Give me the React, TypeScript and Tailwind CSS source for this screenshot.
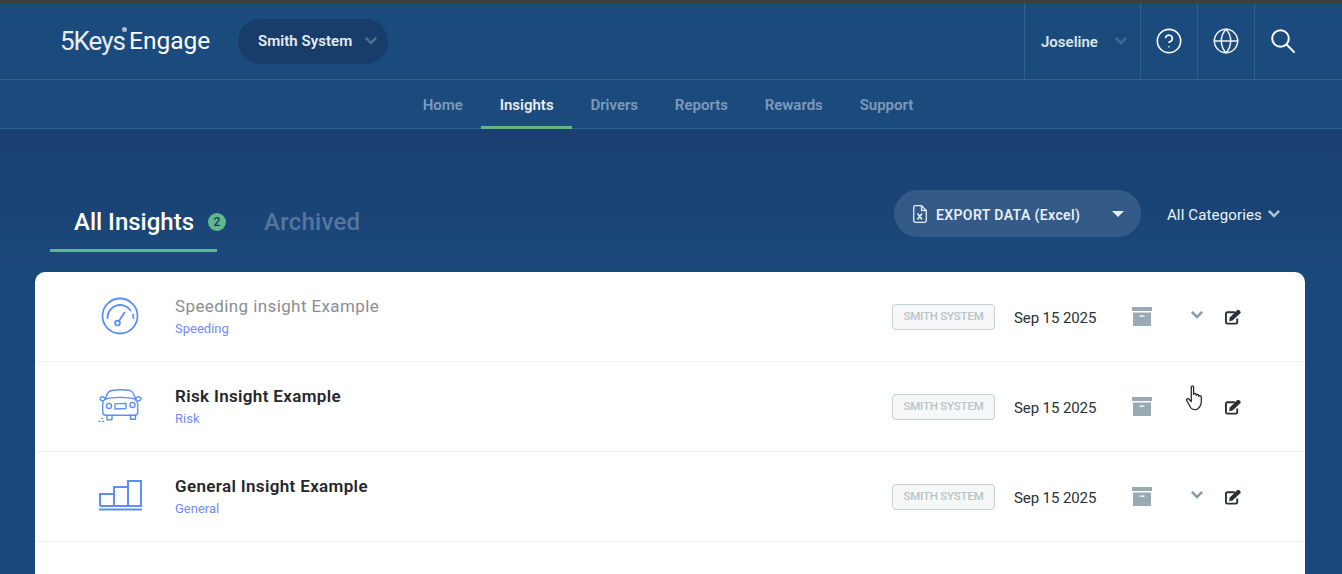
import React from "react";
import { Globe, CircleHelp } from "lucide-react";

// Solid chevron, heavier than the lucide one
const Chevron = ({ className }: { className: string }) => (
  <svg width="12" height="8" viewBox="0 0 12 8" className={className} fill="currentColor">
    <path d="M0 1.800L1.700 0 6 4.300 10.300 0 12 1.800 6 7.800z" />
  </svg>
);

const SearchIcon = () => (
  <svg width="24" height="24" viewBox="0 0 24 24" fill="none" stroke="#fff" strokeWidth="2" strokeLinecap="round">
    <circle cx="9.500" cy="9.500" r="8.300" />
    <path d="M15.500 15.500l7.500 7.500" />
  </svg>
);

// Icons for the insight rows
const GaugeIcon = () => (
  <svg width="38" height="38" viewBox="0 0 38 38" fill="none" stroke="#5c8ff5" strokeWidth="1.800" strokeLinecap="round" className="-translate-y-[1px]">
    <circle cx="19" cy="19" r="17.500" />
    <path d="M6.500 21a12.600 12.600 0 0 1 23-7.500" />
    <path d="M32 17.500c.3 1 .4 2.200.4 3.500" />
    <circle cx="16.500" cy="26" r="2.400" />
    <path d="M18 24l5.500-8.500" />
  </svg>
);

const CarIcon = () => (
  <svg width="44" height="37" viewBox="0 0 44 36" preserveAspectRatio="none" fill="none" stroke="#5c8ff5" strokeWidth="1.400" strokeLinecap="round" strokeLinejoin="round" className="translate-y-[1px]">
    <path d="M7 10l2.500-5.500C10.500 2.500 12 1.600 14 1.400 20 .6 27 .6 31 1.200c2 .3 3.400 1.300 4.200 3L38 10" />
    <path d="M7 10c-1.500 1.200-2.300 2.600-2.300 4.500v8c0 1.800 1.200 3 3 3h29c1.800 0 3-1.200 3-3v-8c0-1.900-.8-3.300-2.700-4.500" />
    <path d="M7 10C14 7.500 30 7.500 38 10" />
    <path d="M6.500 8.500C4.500 6.800 2 7.600 2 9.500c0 1.500 1.800 2 3.500 2.200M38.500 8.500c2-1.700 4.500-.9 4.500 1 0 1.500-1.800 2-3.500 2.200" />
    <circle cx="11" cy="16.500" r="2.500" />
    <circle cx="34.500" cy="15.500" r="2.500" />
    <path d="M17 14.500l11-.5v5l-11 .5z" />
    <path d="M9 25.500V30h5v-4.500M32.500 25.500V29.500h5v-4" />
    <path d="M1 31.500h1M4.500 31.500h1M4 28.500h.5" />
  </svg>
);

const BarsIcon = () => (
  <svg width="43" height="31" viewBox="0 0 43 31" fill="none" stroke="#5c8ff5" strokeWidth="2" className="-translate-y-[1px]">
    <path d="M1 26V14h14v12H1M15 26V7h14v19M29 26V1h13v25H1" />
    <path d="M0 29.500h43" />
  </svg>
);

const ArchiveIcon = () => (
  <svg width="20" height="19" viewBox="0 0 20 19">
    <rect x="0" y="0" width="20" height="4" fill="#9aaab5" />
    <path d="M1 5.500h18V19H1z" fill="#9aaab5" />
    <rect x="7.500" y="8.500" width="5" height="1.300" fill="#fff" />
  </svg>
);

const EditIcon = () => (
  <svg width="17" height="16" viewBox="0 0 17 16" fill="none">
    <path d="M10.500 3H2.500A1.500 1.500 0 0 0 1 4.500v9A1.500 1.500 0 0 0 2.500 15h9a1.500 1.500 0 0 0 1.500-1.500V9.500" stroke="#2b2f36" strokeWidth="2" />
    <path d="M5 8.500L13 .8q1-.8 2 0l1.300 1.300q.8 1 0 2L8 11.800l-3.600.6z" fill="#2b2f36" />
  </svg>
);

const ExcelIcon = () => (
  <svg width="14" height="18" viewBox="0 0 14 18" fill="none" stroke="#e8edf3" strokeWidth="1.300">
    <path d="M2 .7h6.500L13.300 5.500V15.500A1.800 1.800 0 0 1 11.500 17.300H2A1.500 1.500 0 0 1 .7 15.500V2A1.500 1.500 0 0 1 2 .7z" />
    <path d="M8.500 .7V5.500H13.300" />
    <path d="M4.500 8.500l4.500 6M9 8.500l-4.500 6" strokeWidth="1.500" />
  </svg>
);

// Mouse pointer caught in the screenshot
const HandCursor = () => (
  <svg width="19" height="26" viewBox="0 0 18 26" preserveAspectRatio="none" fill="#fff" stroke="#22262c" strokeWidth="1.200" strokeLinejoin="round">
    <path d="M5 2c0-1.500 2.200-1.500 2.200 0v7.500c.2-1.600 2.400-1.600 2.500 0v1c.2-1.500 2.300-1.500 2.400 0v1c.2-1.300 2.200-1.300 2.300.2.300 3 .3 6-.6 8.500-.7 2-1.800 3.300-3.700 4.300-2.200.5-4.200 0-5.400-1.500L.7 15.500c-.8-1.200.6-2.400 1.800-1.500L5 16.500z" />
  </svg>
);

const navLinks = ["Home", "Insights", "Drivers", "Reports", "Rewards", "Support"];

interface Insight {
  title: string;
  category: string;
  icon: React.ReactNode;
  read?: boolean;
  hovered?: boolean;
}

const insights: Insight[] = [
  { title: "Speeding insight Example", category: "Speeding", icon: <GaugeIcon />, read: true },
  { title: "Risk Insight Example", category: "Risk", icon: <CarIcon />, hovered: true },
  { title: "General Insight Example", category: "General", icon: <BarsIcon /> },
];

function InsightRow({ insight }: { insight: Insight }) {
  return (
    <div className="flex h-[90px] items-center border-b border-[#f0f1f3] pl-[50px]">
      <div className="flex w-[70px] justify-center">{insight.icon}</div>
      <div className="ml-[20px] flex-1">
        <div
          className={
            insight.read
              ? "text-[17px] leading-[22px] tracking-[0.4px] text-[#8b8d93]"
              : "text-[17px] font-semibold leading-[22px] tracking-[0.35px] text-[#25272b]"
          }
        >
          {insight.title}
        </div>
        <div className="mt-[3px] text-[13px] leading-[18px] text-[#6f8cf8]">{insight.category}</div>
      </div>
      <div className="flex h-[26px] w-[103px] items-center justify-center rounded-[4px] border border-[#c3ced6] bg-[#f6f8f8] text-[11.500px] font-medium tracking-[-0.2px] text-[#b9c3ca]">
        SMITH SYSTEM
      </div>
      <div className="ml-[19px] w-[82px] translate-y-[2px] whitespace-nowrap text-[15px] tracking-[-0.1px] text-[#2b2f36]">
        Sep 15 2025
      </div>
      <div className="ml-[36px] flex w-[20px]">
        <ArchiveIcon />
      </div>
      <div className="ml-[39px] flex w-[12px] -translate-y-[2px] justify-center">
        {!insight.hovered && <Chevron className="shrink-0 text-[#8a9aa6]" />}
      </div>
      <div className="ml-[22px] mr-[64px] flex w-[16px]">
        <EditIcon />
      </div>
    </div>
  );
}

export default function App() {
  return (
    <div className="h-[574px] w-[1342px] overflow-hidden bg-gradient-to-b from-[#1a3f70] from-[22%] to-[#1b487b] to-[47%] [font-family:Roboto,'Noto_Sans',sans-serif]">
      <div className="h-[3px] bg-[#3f3f3f]" />

      {/* Top bar */}
      <header className="flex h-[77px] items-stretch justify-between border-b border-[#33608f] bg-[#1b4a7d]">
        <div className="flex items-center pl-[61px]">
          <div className="flex w-[150px] items-start whitespace-nowrap leading-none text-white">
            <span className="ml-[-1px] text-[26px] tracking-[-1px] text-[#e6edf4]">5Keys</span>
            <span className="ml-[-3px] mt-[-1px] h-[5px] w-[5px] shrink-0 rounded-full bg-[#a9bdd1]" />
            <span className="ml-[2px] mt-[1px] text-[24.500px]">Engage</span>
          </div>
          <button className="ml-[27px] flex h-[45px] w-[150px] items-center rounded-full bg-[#183d6b] pl-[20px] pt-[1px] text-[15px] font-semibold tracking-[0.05px] text-[#e6ebf1]">
            Smith System
            <Chevron className="ml-[13px] -translate-y-[1px] text-[#4f6f94]" />
          </button>
        </div>
        <div className="flex items-stretch">
          <div className="flex w-[116px] items-center border-l border-[#33608f] pl-[16px] pt-[3px] text-[15px] font-semibold text-[#dce4ec]">
            Joseline
            <Chevron className="ml-[17px] -translate-y-[2px] text-[#48698e]" />
          </div>
          <div className="flex w-[57px] items-center justify-center border-l border-[#33608f]">
            <CircleHelp size={28} strokeWidth={1.4} className="text-white" />
          </div>
          <div className="flex w-[57px] items-center justify-center border-l border-[#33608f]">
            <Globe size={28} strokeWidth={1.3} className="text-[#eef2f6]" />
          </div>
          <div className="flex w-[88px] items-center border-l border-[#33608f] pl-[16px]">
            <SearchIcon />
          </div>
        </div>
      </header>

      {/* Main nav */}
      <nav className="flex h-[49px] items-stretch justify-center border-b border-[#33608f] bg-[#1b4a7d] pr-[6px]">
        {navLinks.map((link) => (
          <a
            key={link}
            className={
              link === "Insights"
                ? "-mb-[1px] flex items-center border-b-[3px] border-[#5fb88c] px-[18.400px] pt-[5px] text-[15px] font-semibold text-[#e8edf3]"
                : "flex items-center px-[18.400px] pt-[3px] text-[15px] font-semibold text-[#7e9aba]"
            }
          >
            {link}
          </a>
        ))}
      </nav>

      <main className="pl-[35px] pr-[37px] pt-[61px]">
        <div className="flex h-[82px] items-start justify-between">
          {/* Tabs */}
          <div className="flex items-start pl-[15px]">
            <div className="flex h-[62px] w-[167px] items-center whitespace-nowrap border-b-[3px] border-[#5fb88c] pl-[24px] pt-[5px]">
              <span className="w-[120px] text-[24px] font-medium leading-none text-white">All Insights</span>
              <span className="ml-[14px] flex h-[18px] w-[18px] shrink-0 items-center justify-center rounded-full bg-[#5fb88c] text-[12px] font-medium text-[#1b3a5c]">
                2
              </span>
            </div>
            <div className="ml-[47px] flex h-[62px] items-center pt-[1px] text-[24px] font-medium leading-none tracking-[0.25px] text-[#54769f]">
              Archived
            </div>
          </div>

          {/* Export and filter */}
          <div className="flex items-start">
            <button className="flex h-[47px] w-[247px] items-center rounded-full bg-[#345a88] pl-[19px] text-[14px] font-semibold tracking-[0.4px] text-[#e8edf3]">
              <ExcelIcon />
              <span className="ml-[9px] translate-y-[2px] whitespace-nowrap">EXPORT DATA (Excel)</span>
              <span className="ml-auto mr-[17px] h-0 w-0 border-x-[6px] border-t-[6px] border-x-transparent border-t-[#e8edf3]" />
            </button>
            <div className="ml-[26px] mr-[25px] flex h-[47px] items-center pt-[4px] text-[15px] tracking-[0.15px] text-[#eef2f6]">
              All Categories
              <Chevron className="ml-[6px] -translate-y-[2px] text-[#b4c3d3]" />
            </div>
          </div>
        </div>

        {/* Insight list */}
        <div className="relative h-[320px] rounded-t-[10px] bg-white">
          {insights.map((insight) => (
            <InsightRow key={insight.title} insight={insight} />
          ))}
          <div className="absolute left-[1151px] top-[113px]">
            <HandCursor />
          </div>
        </div>
      </main>
    </div>
  );
}
